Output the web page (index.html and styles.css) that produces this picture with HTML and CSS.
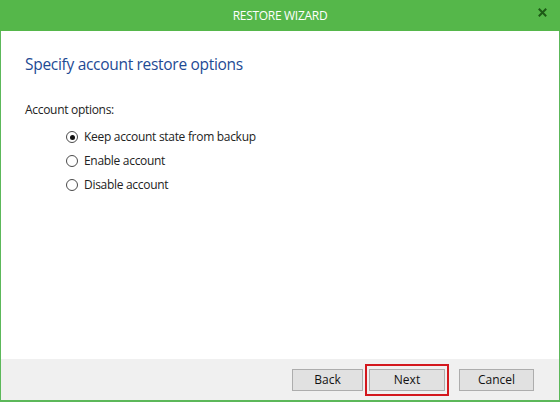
FILE: index.html
```html
<!DOCTYPE html>
<html>
<head>
<meta charset="utf-8">
<link rel="stylesheet" href="styles.css">
</head>
<body>
<div class="window">
  <div class="titlebar">
    <span class="title">RESTORE WIZARD</span>
    <span class="close">
      <svg width="9" height="9" viewBox="0 0 9 9"><path d="M0.8 0.8L8.2 8.2M8.2 0.8L0.8 8.2" stroke="#1d5a16" stroke-width="2"/></svg>
    </span>
  </div>
  <div class="content">
    <h1 class="heading">Specify account restore options</h1>
    <div class="label">Account options:</div>
    <div class="options">
      <label class="option"><span class="radio checked"></span>Keep account state from backup</label>
      <label class="option"><span class="radio"></span>Enable account</label>
      <label class="option"><span class="radio"></span>Disable account</label>
    </div>
  </div>
  <div class="footer">
    <button class="btn back">Back</button>
    <span class="focus"><button class="btn next">Next</button></span>
    <button class="btn cancel">Cancel</button>
  </div>
</div>
</body>
</html>
```
FILE: styles.css
```css
html, body { margin: 0; padding: 0; }
body { width: 560px; height: 402px; font-family: "Open Sans", "Noto Sans", sans-serif; }
.window {
  width: 560px; height: 402px; box-sizing: border-box;
  display: flex; flex-direction: column;
  border: 1px solid #5cb85a; border-top: none; border-bottom-width: 2px;
  background: #fff;
}
.titlebar {
  height: 31px; flex: none; margin: 0 -1px; background: #55b74a;
  display: flex; align-items: center; justify-content: center; position: relative;
}
.title { color: #fff; font-size: 12px; letter-spacing: -0.3px; }
.close { position: absolute; right: 13px; top: 8px; width: 9px; height: 9px; line-height: 0; }
.content { flex: 1; padding: 22px 24px 0; }
.heading { margin: 0; font-weight: normal; font-size: 15.5px; letter-spacing: -0.3px; color: #1e4a94; line-height: 22px; }
.label { margin-top: 27px; font-size: 12px; letter-spacing: -0.3px; color: #222; line-height: 16px; }
.options { display: flex; flex-direction: column; gap: 8px; margin-top: 11px; padding-left: 41px; }
.option { display: flex; align-items: center; font-size: 12px; letter-spacing: -0.3px; color: #222; line-height: 16px; }
.radio {
  width: 12px; height: 12px; border: 1px solid #4a4a4a; border-radius: 50%; box-sizing: border-box;
  margin-right: 6px; position: relative; background: #fff; flex: none;
}
.radio.checked::after {
  content: ""; position: absolute; left: 2.5px; top: 2.5px; width: 5px; height: 5px; border-radius: 50%; background: #111;
}
.footer {
  height: 41px; flex: none; background: #f0f0f0; display: flex; align-items: center; justify-content: flex-end;
  padding-right: 25px;
}
.btn {
  height: 22px; border: 1px solid #adadad; background: #e1e1e1; font-family: inherit; font-size: 12px;
  color: #111; padding: 0; margin: 0;
}
.back { width: 71px; }
.focus { border: 2px solid #d3171d; padding: 3px 2px; margin: 0 10px 0 2px; display: flex; }
.next { width: 76px; }
.cancel { width: 75px; }
```
